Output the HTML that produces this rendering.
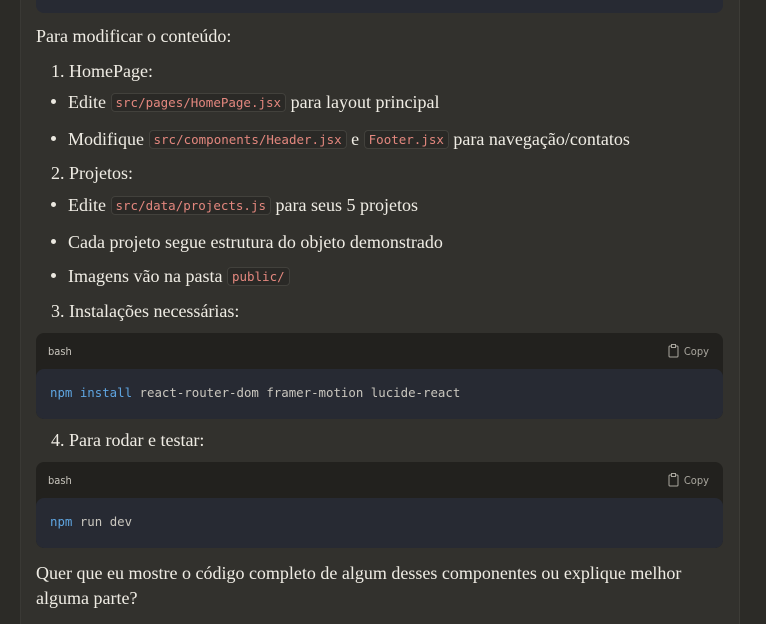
<!DOCTYPE html>
<html><head><meta charset="utf-8"><style>
*{margin:0;padding:0;box-sizing:border-box}
body{width:766px;height:624px;overflow:hidden;background:#2c2b27;font-family:"Liberation Serif",serif;color:#efece4;position:relative}
.main{position:absolute;left:20px;top:0;width:720px;height:624px;background:#32312d;border-left:1px solid #3a3935;border-right:1px solid #3d3c37}
.t{position:absolute;font-size:18px;white-space:nowrap;line-height:20px}
code{font-family:"DejaVu Sans Mono",monospace;font-size:12.5px;color:#e3877e;background:#2a2926;border:1px solid #42413c;border-radius:4px;padding:1px 4px;position:relative;top:-1px}
.dot{position:absolute;width:5px;height:5px;border-radius:50%;background:#ebe8e0}
.cb{position:absolute;left:36px;width:687px;border-radius:8px;background:#22211e;overflow:hidden}
.cb .h{height:36px;font-family:"DejaVu Sans Condensed","DejaVu Sans",sans-serif;font-size:11px;color:#c8c5bd;padding:12px 0 0 12px;position:relative}
.cb .h span{position:absolute;right:14px;top:11px;color:#a9a69e;display:flex;align-items:center;gap:5px}
.cb .b{height:50px;background:#272a33;border-radius:8px;font-family:"DejaVu Sans Mono",monospace;font-size:12.4px;color:#c9c6be;padding:16px 0 0 14px}
.k{color:#5ea4e0}
</style></head><body>
<div class="main"></div>
<div style="position:absolute;left:36px;top:0;width:687px;height:13px;background:#272a33;border-radius:0 0 8px 8px"></div>
<div class="t" style="left:36px;top:26px">Para modificar o conteúdo:</div>
<div class="t" style="left:51px;top:61px">1. HomePage:</div>
<div class="dot" style="left:51px;top:99px"></div>
<div class="t" style="left:68px;top:92px">Edite <code>src/pages/HomePage.jsx</code> para layout principal</div>
<div class="dot" style="left:51px;top:136px"></div>
<div class="t" style="left:68px;top:129px">Modifique <code>src/components/Header.jsx</code> e <code>Footer.jsx</code> para navegação/contatos</div>
<div class="t" style="left:51px;top:163px">2. Projetos:</div>
<div class="dot" style="left:51px;top:202px"></div>
<div class="t" style="left:68px;top:195px">Edite <code>src/data/projects.js</code> para seus 5 projetos</div>
<div class="dot" style="left:51px;top:239px"></div>
<div class="t" style="left:68px;top:232px">Cada projeto segue estrutura do objeto demonstrado</div>
<div class="dot" style="left:51px;top:273px"></div>
<div class="t" style="left:68px;top:266px">Imagens vão na pasta <code>public/</code></div>
<div class="t" style="left:51px;top:301px">3. Instalações necessárias:</div>
<div class="cb" style="top:333px"><div class="h">bash<span><svg width="11" height="14" viewBox="0 0 11 14"><rect x="1" y="2" width="9" height="11" rx="1" fill="none" stroke="#a9a69e" stroke-width="1"/><rect x="3.5" y="0.5" width="4" height="3" fill="#22211e" stroke="#a9a69e" stroke-width="1"/></svg>Copy</span></div><div class="b"><span class="k">npm install</span> react-router-dom framer-motion lucide-react</div></div>
<div class="t" style="left:51px;top:430px">4. Para rodar e testar:</div>
<div class="cb" style="top:462px"><div class="h">bash<span><svg width="11" height="14" viewBox="0 0 11 14"><rect x="1" y="2" width="9" height="11" rx="1" fill="none" stroke="#a9a69e" stroke-width="1"/><rect x="3.5" y="0.5" width="4" height="3" fill="#22211e" stroke="#a9a69e" stroke-width="1"/></svg>Copy</span></div><div class="b"><span class="k">npm</span> run dev</div></div>
<div class="t" style="left:36px;top:563px">Quer que eu mostre o código completo de algum desses componentes ou explique melhor</div>
<div class="t" style="left:36px;top:588px">alguma parte?</div>
</body></html>
